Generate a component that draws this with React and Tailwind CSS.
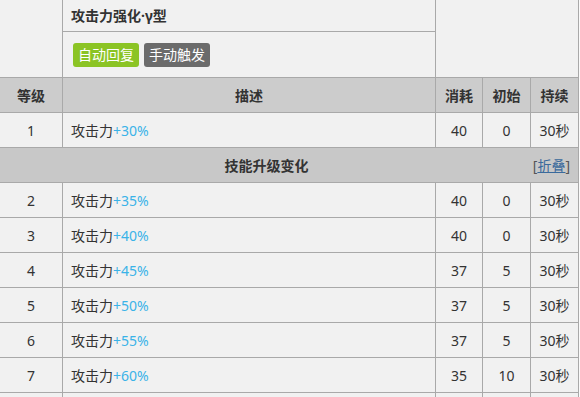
const rows = [
  { lv: 2, pct: '+35%', cost: 40, init: 0, dur: '30秒' },
  { lv: 3, pct: '+40%', cost: 40, init: 0, dur: '30秒' },
  { lv: 4, pct: '+45%', cost: 37, init: 5, dur: '30秒' },
  { lv: 5, pct: '+50%', cost: 37, init: 5, dur: '30秒' },
  { lv: 6, pct: '+55%', cost: 37, init: 5, dur: '30秒' },
  { lv: 7, pct: '+60%', cost: 35, init: 10, dur: '30秒' },
];

const cell = 'border border-[#a9a9a9]';

const LevelRow = ({ lv, pct, cost, init, dur }) => (
  <tr className="h-[35px] bg-[#f1f1f1] text-[14px] text-[#333]">
    <td className={`${cell} text-center`}>{lv}</td>
    <td className={`${cell} pl-2`}>
      攻击力<span className="text-[#3ab3e8]">{pct}</span>
    </td>
    <td className={`${cell} text-center`}>{cost}</td>
    <td className={`${cell} text-center`}>{init}</td>
    <td className={`${cell} text-center`}>{dur}</td>
  </tr>
);

export default function App() {
  return (
    <div
      className="h-[397px] w-[580px] overflow-hidden bg-[#fafafa]"
      style={{ fontFamily: '"Noto Sans", "Noto Sans CJK SC", sans-serif' }}
    >
      <table className="-ml-px -mt-px w-[579px] table-fixed border-collapse">
        <colgroup>
          <col className="w-[63px]" />
          <col className="w-[373px]" />
          <col className="w-[47px]" />
          <col className="w-[48px]" />
          <col className="w-[48px]" />
        </colgroup>
        <tbody>
          <tr className="h-[32px] bg-[#f1f1f1]">
            <td rowSpan={2} className={cell}></td>
            <td className={`${cell} pl-2 text-[14px] font-bold text-[#333]`}>攻击力强化·γ型</td>
            <td rowSpan={2} colSpan={3} className={cell}></td>
          </tr>
          <tr className="h-[46px] bg-[#f1f1f1]">
            <td className={`${cell} pl-[10px]`}>
              <div className="flex gap-[5px] text-[14px] leading-none text-white">
                <span className="rounded-[3px] bg-[#8bc424] px-[5px] py-[5px]">自动回复</span>
                <span className="rounded-[3px] bg-[#6b6b6b] px-[5px] py-[5px]">手动触发</span>
              </div>
            </td>
          </tr>
          <tr className="h-[35px] bg-[#cccccc] text-[14px] font-bold text-[#333]">
            <th className={cell}>等级</th>
            <th className={cell}>描述</th>
            <th className={cell}>消耗</th>
            <th className={cell}>初始</th>
            <th className={cell}>持续</th>
          </tr>
          <LevelRow lv={1} pct="+30%" cost={40} init={0} dur="30秒" />
          <tr className="h-[35px] bg-[#c8c8c8] text-[14px] text-[#333]">
            <td colSpan={5} className={cell}>
              <div className="flex items-center">
                <span className="flex-1 text-center font-bold">技能升级变化</span>
                <span className="pr-2 text-[#555]">
                  [<span className="text-[#3a6a9c] underline">折叠</span>]
                </span>
              </div>
            </td>
          </tr>
          {rows.map((r) => (
            <LevelRow key={r.lv} {...r} />
          ))}
          <tr className="h-[35px] bg-[#f1f1f1]">
            <td className={cell}></td>
            <td className={cell}></td>
            <td className={cell}></td>
            <td className={cell}></td>
            <td className={cell}></td>
          </tr>
        </tbody>
      </table>
    </div>
  );
}
